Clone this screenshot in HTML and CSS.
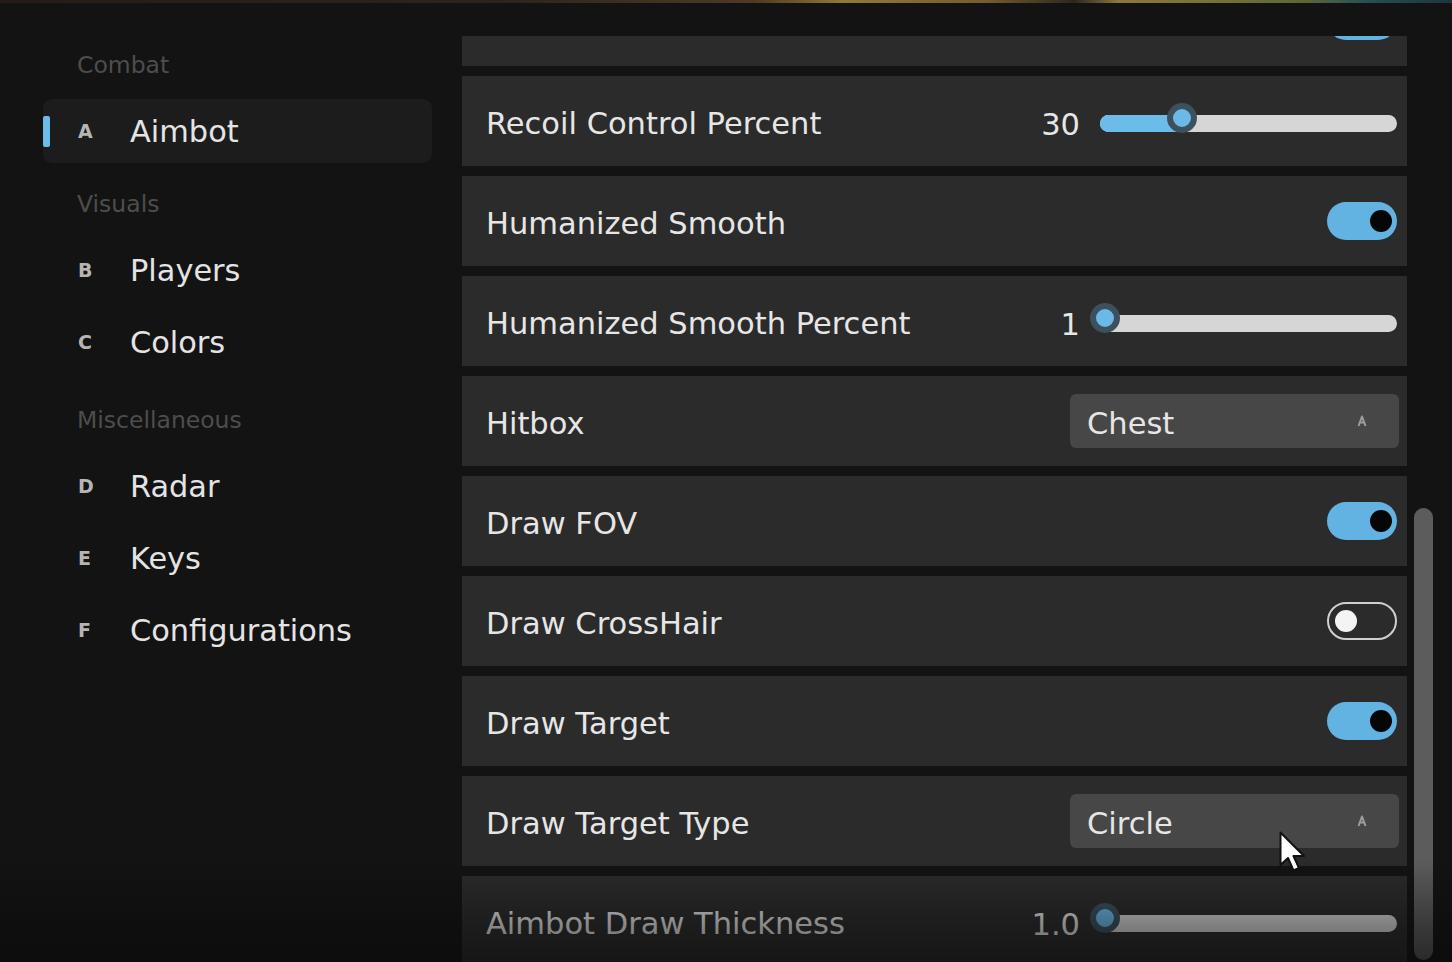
FILE: index.html
```html
<!DOCTYPE html>
<html lang="en">
<head>
<meta charset="utf-8">
<title>Aimbot settings</title>
<link rel="stylesheet" href="styles.css">
</head>
<body>
<div class="topline"></div>
<div class="app">
  <nav class="sidebar">
    <div class="nav-group">
      <div class="nav-label">Combat</div>
      <div class="nav-item active"><span class="marker"></span><span class="key">A</span><span class="name">Aimbot</span></div>
    </div>
    <div class="nav-group">
      <div class="nav-label">Visuals</div>
      <div class="nav-item"><span class="marker"></span><span class="key">B</span><span class="name">Players</span></div>
      <div class="nav-item"><span class="marker"></span><span class="key">C</span><span class="name">Colors</span></div>
    </div>
    <div class="nav-group misc">
      <div class="nav-label">Miscellaneous</div>
      <div class="nav-item"><span class="marker"></span><span class="key">D</span><span class="name">Radar</span></div>
      <div class="nav-item"><span class="marker"></span><span class="key">E</span><span class="name">Keys</span></div>
      <div class="nav-item"><span class="marker"></span><span class="key">F</span><span class="name">Configurations</span></div>
    </div>
  </nav>

  <main class="main">
    <div class="viewport">
      <div class="list">
        <div class="row">
          <span class="label"></span>
          <span class="toggle on"><span class="knob"></span></span>
        </div>
        <div class="row">
          <span class="label">Recoil Control Percent</span>
          <span class="slider">
            <span class="value">30</span>
            <span class="track"><span class="fill" style="width:82px"></span><span class="thumb" style="left:67px"></span></span>
          </span>
        </div>
        <div class="row">
          <span class="label">Humanized Smooth</span>
          <span class="toggle on"><span class="knob"></span></span>
        </div>
        <div class="row">
          <span class="label">Humanized Smooth Percent</span>
          <span class="slider">
            <span class="value">1</span>
            <span class="track"><span class="fill" style="width:5px"></span><span class="thumb" style="left:-10px"></span></span>
          </span>
        </div>
        <div class="row">
          <span class="label">Hitbox</span>
          <span class="select"><span class="select-text">Chest</span>
            <svg class="caret" viewBox="0 0 10 12" aria-hidden="true"><path d="M1.5 11 L5 1.5 L8.5 11 M3 7.5 H7" fill="none" stroke="#9c9c9c" stroke-width="2" stroke-linejoin="round"/></svg>
          </span>
        </div>
        <div class="row">
          <span class="label">Draw FOV</span>
          <span class="toggle on"><span class="knob"></span></span>
        </div>
        <div class="row">
          <span class="label">Draw CrossHair</span>
          <span class="toggle off"><span class="knob"></span></span>
        </div>
        <div class="row">
          <span class="label">Draw Target</span>
          <span class="toggle on"><span class="knob"></span></span>
        </div>
        <div class="row">
          <span class="label">Draw Target Type</span>
          <span class="select"><span class="select-text">Circle</span>
            <svg class="caret" viewBox="0 0 10 12" aria-hidden="true"><path d="M1.5 11 L5 1.5 L8.5 11 M3 7.5 H7" fill="none" stroke="#9c9c9c" stroke-width="2" stroke-linejoin="round"/></svg>
          </span>
        </div>
        <div class="row">
          <span class="label">Aimbot Draw Thickness</span>
          <span class="slider">
            <span class="value">1.0</span>
            <span class="track"><span class="fill" style="width:5px"></span><span class="thumb" style="left:-10px"></span></span>
          </span>
        </div>
      </div>
    </div>
    <div class="scrollbar"><div class="scroll-thumb" style="margin-top:472px;height:452px"></div></div>
  </main>
</div>
<div class="fade"></div>
<svg class="cursor" viewBox="0 0 28 42" aria-hidden="true"><path d="M1.5 1.5 L1.5 34 L9 27 L14.5 39.5 L20 37 L14.5 25 L25 25 Z" fill="#ffffff" stroke="#111111" stroke-width="2" stroke-linejoin="round"/></svg>
</body>
</html>
```
FILE: styles.css
```css
* { box-sizing: border-box; margin: 0; padding: 0; }
html, body { width: 1452px; height: 962px; overflow: hidden; }
body {
  background: #131313;
  font-family: "DejaVu Sans", Verdana, sans-serif;
  color: #e4e4e4;
  position: relative;
}
.topline {
  position: absolute; left: 0; top: 0; width: 1452px; height: 3px;
  background: linear-gradient(90deg, #2a201a 0%, #3a2b20 35%, #6a4c28 52%, #c9a24a 58%, #a07a3a 68%, #3a2e22 74%, #c0a050 77%, #a09848 84%, #7a8a48 90%, #2f6a72 94%, #1f4450 100%);
  opacity: .7;
  z-index: 3;
}
.app { display: flex; height: 962px; }

/* Sidebar */
.sidebar { width: 462px; flex: none; padding: 50px 30px 0 43px; }
.nav-group + .nav-group { margin-top: 26px; }
.nav-group.misc { margin-top: 31px; }
.nav-label {
  height: 30px; line-height: 30px;
  font-size: 23.5px; color: #4d4d4d;
  padding-left: 34px; margin-bottom: 19px;
}
.nav-item { height: 64px; display: flex; align-items: center; border-radius: 9px; }
.nav-item + .nav-item { margin-top: 8px; }
.nav-item.active { background: #1c1c1c; }
.marker { width: 7px; height: 31px; border-radius: 2px; flex: none; }
.active .marker { background: #6cbbe8; }
.key { width: 52px; margin-left: 28px; font-size: 19px; font-weight: bold; color: #b5b5b5; flex: none; }
.name { font-size: 30.4px; color: #e4e4e4; white-space: nowrap; }

/* Main list */
.main { flex: 1; display: flex; padding-top: 36px; }
.viewport { width: 945px; height: 926px; overflow: hidden; flex: none; }
.list { margin-top: -60px; }
.row {
  height: 90px; margin-bottom: 10px;
  background: #2b2b2b;
  display: flex; align-items: center;
  padding: 0 10px 0 24px;
}
.label { flex: 1; font-size: 30.5px; color: #e6e6e6; padding-top: 5px; white-space: nowrap; }

/* Slider */
.slider { display: flex; align-items: center; padding-top: 4px; }
.value { font-size: 30.5px; color: #e6e6e6; margin-right: 20px; padding-top: 2px; }
.track { position: relative; display: block; width: 297px; height: 17px; border-radius: 9px; background: #d6d6d6; }
.fill { display: block; height: 100%; border-radius: 9px 0 0 9px; background: #6cbce9; }
.thumb {
  position: absolute; top: -12px;
  width: 30px; height: 30px; border-radius: 50%;
  background: #6ab9e6;
  border: 6px solid rgba(58, 74, 86, 0.95);
}

/* Toggle */
.toggle {
  width: 70px; height: 38px; border-radius: 19px;
  background: #63b3e2;
  display: flex; align-items: center; justify-content: flex-end;
  padding: 0 5px; flex: none;
}
.knob { width: 22px; height: 22px; border-radius: 50%; background: #060606; display: block; }
.toggle.off { background: transparent; border: 2.5px solid #d0d0d0; justify-content: flex-start; padding: 0 5.5px; }
.toggle.off .knob { background: #f4f4f4; }

/* Select */
.select {
  width: 329px; height: 54px; border-radius: 6px;
  background: #474747;
  display: flex; align-items: center;
  padding: 4px 0 0 17px; margin-right: -2px; flex: none;
}
.select-text { flex: 1; font-size: 30.5px; color: #e6e6e6; }
.caret { width: 10px; height: 12px; margin-right: 32px; margin-top: -4px; }

/* Scrollbar */
.scrollbar { width: 19px; margin-left: 7px; flex: none; }
.scroll-thumb { width: 19px; border-radius: 10px; background: #5c5c5c; }

/* Bottom fade + cursor overlays */
.fade {
  position: absolute; left: 0; top: 0; width: 1452px; height: 962px;
  pointer-events: none;
  background: linear-gradient(to bottom, rgba(8,8,8,0) 860px, rgba(8,8,8,.42) 925px, rgba(8,8,8,.6) 962px);
  z-index: 2;
}
.cursor { position: absolute; left: 1279px; top: 831px; width: 28px; height: 42px; z-index: 4; }
```
